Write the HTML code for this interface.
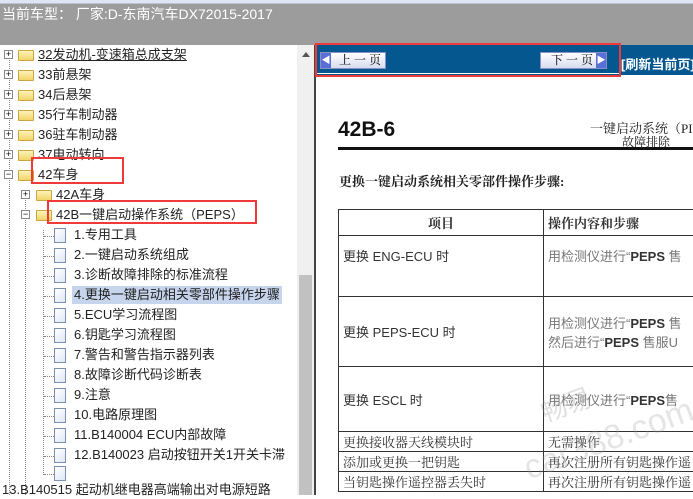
<!DOCTYPE html>
<html><head><meta charset="utf-8"><style>
*{margin:0;padding:0;box-sizing:border-box}
body{width:693px;height:495px;overflow:hidden;background:#fff;font-family:"Liberation Sans","Noto Sans CJK SC",sans-serif;position:relative}
.abs{position:absolute}
#top{left:0;top:0;width:693px;height:4px;background:#dde6f2;border-bottom:1px solid #b8c4d4}
#hdr{left:0;top:4px;width:693px;height:41px;background:#9c9c9c;color:#fff;font-size:14px;padding:2px 0 0 2px;line-height:16px}
#tree{left:0;top:45px;width:297px;height:450px;background:#fff;font-size:13px;color:#222}
.row{position:absolute;height:18px;line-height:18px;white-space:nowrap}
.pm{position:absolute;width:9px;height:9px;border:1px solid #888;background:#fff;font-size:9px;line-height:7px;text-align:center;color:#000}
.fold{position:absolute;width:16px;height:11px;background:linear-gradient(#fff4b8,#f2d46a);border:1px solid #c9a640;border-radius:1px}
.doc{position:absolute;width:12px;height:15px;background:linear-gradient(135deg,#fff,#dfe8f6);border:1px solid #7b8fb0}
.dot{position:absolute;border-top:1px dotted #888;height:0}
.vdot{position:absolute;border-left:1px dotted #888;width:0}
#sb{left:297px;top:45px;width:17px;height:450px;background:#f0f0f0}
#thumb{left:299px;top:275px;width:13px;height:220px;background:#c1c1c1}
#pane{left:314px;top:45px;width:379px;height:450px;background:#fff;border-left:2px solid #444}
#nav{left:316px;top:45px;width:377px;height:30px;background:#04588f}
.btn{position:absolute;top:7px;height:17px;background:linear-gradient(#fff,#d6dcf0);border:1px solid #8890c8;font-size:12px;line-height:15px;color:#000;font-family:"Liberation Serif","Noto Serif CJK SC",serif}
.arr{position:absolute;top:0;width:10px;height:15px;background:#5a6fd6;color:#fff;font-size:9px;line-height:15px;text-align:center}
.red{position:absolute;border:2px solid #f03a3a}
.serif{font-family:"Liberation Serif","Noto Serif CJK SC",serif}
table{border-collapse:collapse;position:absolute;left:338px;top:209px;width:380px;font-size:13px;color:#333}
td{border:1px solid #333;padding:0 4px;vertical-align:middle}
</style></head><body>
<div id="top" class="abs"></div>
<div id="hdr" class="abs">当前车型： 厂家:D-东南汽车DX72015-2017</div>
<div id="tree" class="abs">
<div class="vdot" style="left:9px;top:10px;height:440px"></div>
<div class="vdot" style="left:25px;top:150px;height:300px"></div>
<div class="vdot" style="left:43px;top:185px;height:245px"></div>
</div>
<div class="abs" style="left:0;top:45px;width:297px;height:450px;font-size:13px;color:#222">
<div class="pm" style="left:4px;top:5px">+</div><div class="fold" style="left:18px;top:5px"></div><div class="row" style="left:38px;top:1px;text-decoration:underline">32发动机-变速箱总成支架</div>
<div class="pm" style="left:4px;top:25px">+</div><div class="fold" style="left:18px;top:25px"></div><div class="row" style="left:38px;top:21px">33前悬架</div>
<div class="pm" style="left:4px;top:45px">+</div><div class="fold" style="left:18px;top:45px"></div><div class="row" style="left:38px;top:41px">34后悬架</div>
<div class="pm" style="left:4px;top:65px">+</div><div class="fold" style="left:18px;top:65px"></div><div class="row" style="left:38px;top:61px">35行车制动器</div>
<div class="pm" style="left:4px;top:85px">+</div><div class="fold" style="left:18px;top:85px"></div><div class="row" style="left:38px;top:81px">36驻车制动器</div>
<div class="pm" style="left:4px;top:105px">+</div><div class="fold" style="left:18px;top:105px"></div><div class="row" style="left:38px;top:101px">37电动转向</div>
<div class="pm" style="left:4px;top:125px">−</div><div class="fold" style="left:18px;top:125px"></div><div class="row" style="left:38px;top:121px">42车身</div>
<div class="pm" style="left:21px;top:145px">+</div><div class="fold" style="left:36px;top:145px"></div><div class="row" style="left:56px;top:141px">42A车身</div>
<div class="pm" style="left:21px;top:165px">−</div><div class="fold" style="left:36px;top:165px"></div><div class="row" style="left:56px;top:161px">42B一键启动操作系统（PEPS）</div>
<div class="doc" style="left:54px;top:183px"></div><div class="dot" style="left:44px;top:191px;width:10px"></div><div class="row" style="left:74px;top:181px">1.专用工具</div>
<div class="doc" style="left:54px;top:203px"></div><div class="dot" style="left:44px;top:211px;width:10px"></div><div class="row" style="left:74px;top:201px">2.一键启动系统组成</div>
<div class="doc" style="left:54px;top:223px"></div><div class="dot" style="left:44px;top:231px;width:10px"></div><div class="row" style="left:74px;top:221px">3.诊断故障排除的标准流程</div>
<div class="doc" style="left:54px;top:243px"></div><div class="dot" style="left:44px;top:251px;width:10px"></div><div class="row" style="left:72px;top:241px;background:#c6d4ec;padding:0 2px">4.更换一键启动相关零部件操作步骤</div>
<div class="doc" style="left:54px;top:263px"></div><div class="dot" style="left:44px;top:271px;width:10px"></div><div class="row" style="left:74px;top:261px">5.ECU学习流程图</div>
<div class="doc" style="left:54px;top:283px"></div><div class="dot" style="left:44px;top:291px;width:10px"></div><div class="row" style="left:74px;top:281px">6.钥匙学习流程图</div>
<div class="doc" style="left:54px;top:303px"></div><div class="dot" style="left:44px;top:311px;width:10px"></div><div class="row" style="left:74px;top:301px">7.警告和警告指示器列表</div>
<div class="doc" style="left:54px;top:323px"></div><div class="dot" style="left:44px;top:331px;width:10px"></div><div class="row" style="left:74px;top:321px">8.故障诊断代码诊断表</div>
<div class="doc" style="left:54px;top:343px"></div><div class="dot" style="left:44px;top:351px;width:10px"></div><div class="row" style="left:74px;top:341px">9.注意</div>
<div class="doc" style="left:54px;top:363px"></div><div class="dot" style="left:44px;top:371px;width:10px"></div><div class="row" style="left:74px;top:361px">10.电路原理图</div>
<div class="doc" style="left:54px;top:383px"></div><div class="dot" style="left:44px;top:391px;width:10px"></div><div class="row" style="left:74px;top:381px">11.B140004 ECU内部故障</div>
<div class="doc" style="left:54px;top:403px"></div><div class="dot" style="left:44px;top:411px;width:10px"></div><div class="row" style="left:74px;top:401px">12.B140023 启动按钮开关1开关卡滞</div>
<div class="doc" style="left:54px;top:421px"></div><div class="dot" style="left:44px;top:429px;width:10px"></div>
<div class="row" style="left:2px;top:436px">13.B140515 起动机继电器高端输出对电源短路</div>
</div>
<div class="red" style="left:31px;top:157px;width:93px;height:27px"></div>
<div class="red" style="left:47px;top:200px;width:210px;height:24px"></div>
<div id="sb" class="abs"><div style="position:absolute;left:5px;top:7px;border:4px solid transparent;border-bottom:5px solid #555;border-top:0"></div></div>
<div id="thumb" class="abs"></div>
<div id="pane" class="abs"></div>
<div id="nav" class="abs">
<div class="btn" style="left:4px;width:66px"><div class="arr" style="left:0">◀</div><span style="position:absolute;left:18px">上 一 页</span></div>
<div class="btn" style="left:224px;width:67px"><div class="arr" style="right:0">▶</div><span style="position:absolute;left:10px">下 一 页</span></div>
<div style="position:absolute;left:305px;top:9px;color:#fff;font-weight:bold;font-size:13px;white-space:nowrap">[刷新当前页]</div>
<div style="position:absolute;left:0;top:28px;width:304px;height:1px;background:#fff"></div>
</div>
<div class="red" style="left:315px;top:43px;width:306px;height:34px"></div>
<div class="abs" style="left:338px;top:118px;font-size:21px;font-weight:bold;color:#111">42B-6</div>
<div class="abs serif" style="left:590px;top:118px;font-size:13px;color:#222;white-space:nowrap">一键启动系统（PI</div>
<div class="abs serif" style="left:622px;top:133px;font-size:12px;color:#222">故障排除</div>
<div class="abs" style="left:338px;top:147px;width:360px;height:3px;background:#111"></div>
<div class="abs serif" style="left:339px;top:171px;font-size:13px;font-weight:bold;color:#222">更换一键启动系统相关零部件操作步骤:</div>
<table>
<tr style="height:26px"><td class="serif" style="width:205px;text-align:center;font-weight:bold">项目</td><td class="serif" style="font-weight:bold">操作内容和步骤</td></tr>
<tr style="height:61px"><td style="vertical-align:top;padding-top:10px">更换 ENG-ECU 时</td><td style="vertical-align:top;padding-top:10px;color:#777">用检测仪进行“<b style="color:#333">PEPS</b> 售</td></tr>
<tr style="height:70px"><td>更换 PEPS-ECU 时</td><td style="color:#777">用检测仪进行“<b style="color:#333">PEPS</b> 售<br>然后进行“<b style="color:#333">PEPS</b> 售服U</td></tr>
<tr style="height:65px"><td>更换 ESCL 时</td><td style="color:#777">用检测仪进行“<b style="color:#333">PEPS</b>售</td></tr>
<tr style="height:20px"><td class="serif">更换接收器天线模块时</td><td class="serif">无需操作</td></tr>
<tr style="height:20px"><td class="serif">添加或更换一把钥匙</td><td class="serif">再次注册所有钥匙操作遥</td></tr>
<tr style="height:20px"><td class="serif">当钥匙操作遥控器丢失时</td><td class="serif">再次注册所有钥匙操作遥</td></tr>
</table>
<div class="abs" style="left:540px;top:385px;font-size:26px;color:rgba(150,150,150,.3);transform:rotate(-20deg)">畅易</div>
<div class="abs" style="left:520px;top:420px;font-size:34px;color:rgba(150,150,150,.25);transform:rotate(-20deg)">car388.com</div>
</body></html>
